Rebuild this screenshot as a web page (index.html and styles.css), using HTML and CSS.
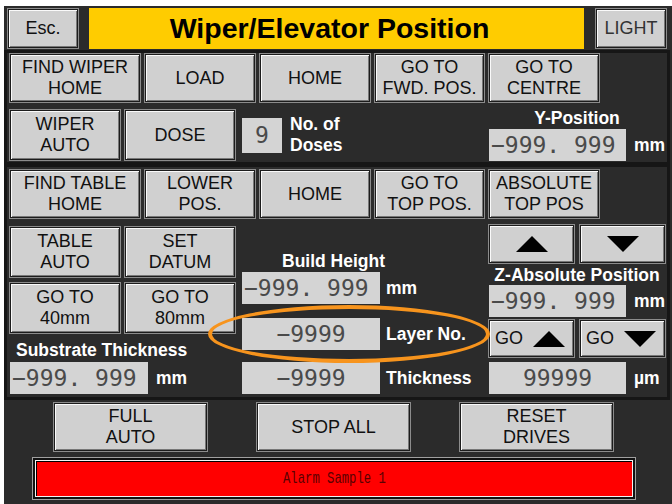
FILE: index.html
```html
<!DOCTYPE html>
<html lang="en">
<head>
    <meta charset="UTF-8">
    <meta name="viewport" content="width=device-width, initial-scale=1.0">
    <title>Wiper/Elevator Position</title>
    <link rel="stylesheet" href="styles.css">
</head>
<body>
    <div class="screen">
        <div class="topbar">
            <button class="btn btn-esc">Esc.</button>
            <div class="title">Wiper/Elevator Position</div>
            <button class="btn btn-light">LIGHT</button>
        </div>

        <div class="panel panel-wiper">
            <div class="btn-row">
                <button class="btn w130">FIND WIPER<br>HOME</button>
                <button class="btn">LOAD</button>
                <button class="btn">HOME</button>
                <button class="btn w109">GO TO<br>FWD. POS.</button>
                <button class="btn">GO TO<br>CENTRE</button>
            </div>
            <div class="wiper-row">
                <button class="btn tall">WIPER<br>AUTO</button>
                <button class="btn tall">DOSE</button>
                <div class="field field-small">9</div>
                <div class="label doses">No. of<br>Doses</div>
                <div class="readout-group y-pos">
                    <div class="label">Y-Position</div>
                    <div class="readout-row">
                        <div class="field">−999. 999</div>
                        <span class="label unit">mm</span>
                    </div>
                </div>
            </div>
        </div>

        <div class="panel panel-table">
            <div class="btn-row">
                <button class="btn w130">FIND TABLE<br>HOME</button>
                <button class="btn">LOWER<br>POS.</button>
                <button class="btn">HOME</button>
                <button class="btn w109">GO TO<br>TOP POS.</button>
                <button class="btn">ABSOLUTE<br>TOP POS</button>
            </div>
            <div class="table-body">
                <div class="col col-left">
                    <div class="btn-grid">
                        <button class="btn tall">TABLE<br>AUTO</button>
                        <button class="btn tall">SET<br>DATUM</button>
                        <button class="btn tall">GO TO<br>40mm</button>
                        <button class="btn tall">GO TO<br>80mm</button>
                    </div>
                    <div class="label substrate">Substrate Thickness</div>
                    <div class="readout-row">
                        <div class="field">−999. 999</div>
                        <span class="label unit">mm</span>
                    </div>
                </div>

                <div class="col col-mid">
                    <div class="label build">Build Height</div>
                    <div class="readout-row">
                        <div class="field">−999. 999</div>
                        <span class="label unit">mm</span>
                    </div>
                    <div class="readout-row layer">
                        <div class="field centered">−9999</div>
                        <span class="label unit">Layer No.</span>
                    </div>
                    <div class="readout-row thick">
                        <div class="field centered">−9999</div>
                        <span class="label unit">Thickness</span>
                    </div>
                </div>

                <div class="col col-right">
                    <div class="arrow-row">
                        <button class="btn arrow">
                            <svg width="32" height="16" viewBox="0 0 32 16"><path d="M16 0 L32 16 L0 16 Z" fill="#000"/></svg>
                        </button>
                        <button class="btn arrow">
                            <svg width="32" height="16" viewBox="0 0 32 16"><path d="M0 0 L32 0 L16 16 Z" fill="#000"/></svg>
                        </button>
                    </div>
                    <div class="label z-label">Z-Absolute Position</div>
                    <div class="readout-row">
                        <div class="field">−999. 999</div>
                        <span class="label unit">mm</span>
                    </div>
                    <div class="arrow-row go-row">
                        <button class="btn arrow go">GO
                            <svg width="32" height="16" viewBox="0 0 32 16"><path d="M16 0 L32 16 L0 16 Z" fill="#000"/></svg>
                        </button>
                        <button class="btn arrow go">GO
                            <svg width="32" height="16" viewBox="0 0 32 16"><path d="M0 0 L32 0 L16 16 Z" fill="#000"/></svg>
                        </button>
                    </div>
                    <div class="readout-row micro">
                        <div class="field centered">99999</div>
                        <span class="label unit">µm</span>
                    </div>
                </div>
            </div>
        </div>

        <div class="bottom-row">
            <button class="btn big">FULL<br>AUTO</button>
            <button class="btn big">STOP ALL</button>
            <button class="btn big">RESET<br>DRIVES</button>
        </div>

        <div class="alarm">
            <div class="alarm-inner"><span class="alarm-text">Alarm Sample 1</span></div>
        </div>

        <div class="highlight"></div>
    </div>
</body>
</html>
```

FILE: styles.css
```css
* {
    box-sizing: border-box;
}

body {
    margin: 0;
    padding: 6px 0 0 4px;
    background: #fff;
    font-family: "Liberation Sans", Arial, sans-serif;
    overflow: hidden;
}

.screen {
    position: relative;
    width: 668px;
    height: 498px;
    background: #2b2b2b;
}

/* header */
.topbar {
    display: flex;
    align-items: center;
    height: 44px;
    padding: 0 4px;
}

.title {
    width: 495px;
    height: 41px;
    margin: 0 12px 0 11px;
    padding-right: 14px;
    background: #ffcc00;
    color: #000;
    font-weight: bold;
    font-size: 28.5px;
    line-height: 41px;
    text-align: center;
    white-space: nowrap;
}

/* buttons */
.btn {
    width: 110px;
    height: 48px;
    padding: 0;
    margin: 0;
    background: #d0d0d0;
    color: #111;
    border: 1px solid #1c1c1c;
    box-shadow: 0 0 0 1px #8c8c8c, inset 1px 1px 0 #fafafa, inset -1px -1px 0 #777;
    font-family: "Liberation Sans", Arial, sans-serif;
    font-size: 18px;
    line-height: 21px;
    text-align: center;
}

.btn-esc,
.btn-light {
    width: 70px;
    height: 39px;
}

.btn-light {
    color: #333;
}

.w130 {
    width: 130px;
}

.w109 {
    width: 109px;
}

.tall {
    height: 50px;
}

/* panels */
.panel {
    width: 666px;
    border: 3px solid #161616;
}

.panel-wiper {
    height: 115px;
    padding: 1px 0 0 3px;
}

.panel-table {
    height: 236px;
    margin-top: -1px;
    padding: 3px 0 0 3px;
}

.btn-row {
    display: flex;
    gap: 5px;
}

.wiper-row {
    display: flex;
    align-items: center;
    height: 52px;
    margin-top: 7px;
    gap: 5px;
}

.label {
    color: #fff;
    font-weight: bold;
    font-size: 17.5px;
    line-height: 20px;
}

.doses {
    margin-left: 3px;
    line-height: 21px;
}

.field {
    width: 137px;
    height: 32px;
    background: #d4d4d4;
    color: #4a4a4a;
    font-family: "DejaVu Sans Mono", monospace;
    font-size: 23px;
    line-height: 32px;
    padding-left: 2px;
    white-space: nowrap;
    overflow: hidden;
}

.field.centered {
    text-align: center;
    padding-left: 0;
}

.field-small {
    width: 40px;
    height: 35px;
    margin-left: 2px;
    line-height: 35px;
    text-align: center;
    padding-left: 0;
}

.readout-group {
    display: flex;
    flex-direction: column;
    align-items: center;
}

.y-pos {
    align-self: flex-end;
    margin-left: auto;
    margin-right: 2px;
    width: 176px;
    gap: 1px;
}

.readout-row {
    display: flex;
    align-items: center;
    gap: 8px;
}

.unit {
    white-space: nowrap;
}

/* table panel body */
.table-body {
    display: flex;
}

.col {
    display: flex;
    flex-direction: column;
}

.col-left {
    width: 232px;
}

.btn-grid {
    display: grid;
    grid-template-columns: 110px 110px;
    gap: 6px 5px;
    margin-top: 9px;
}

.substrate {
    margin: 7px 0 2px 6px;
    white-space: nowrap;
}

.col-left .field {
    width: 138px;
}

.col-mid {
    width: 247px;
}

.build {
    margin: 33px 0 1px 40px;
}

.col-mid .field {
    width: 138px;
}

.col-mid .readout-row {
    gap: 6px;
}

.layer {
    margin-top: 14px;
}

.thick {
    margin-top: 12px;
}

.col-right {
    width: 176px;
}

.arrow-row {
    display: flex;
    gap: 6px;
    margin-top: 7px;
}

.arrow {
    width: 85px;
    height: 38px;
    display: flex;
    align-items: center;
    justify-content: center;
}

.go {
    justify-content: space-between;
    padding: 0 8px 0 5px;
    height: 37px;
}

.go-row {
    margin-top: 3px;
}

.z-label {
    text-align: center;
    margin-top: 2px;
    white-space: nowrap;
}

.micro {
    margin-top: 5px;
}

/* bottom */
.bottom-row {
    display: flex;
    gap: 50px;
    padding-left: 50px;
    margin-top: 3px;
}

.big {
    width: 153px;
    height: 48px;
}

.alarm {
    width: 604px;
    height: 43px;
    margin: 6px 0 0 28px;
    border: 1px solid #a0a0a0;
    background: #111;
    padding: 2px;
}

.alarm-inner {
    height: 100%;
    background: #ff0000;
    border: 1px solid #f4f4f4;
    box-shadow: inset 1px 1px 0 #000;
    color: #5a0000;
    font-family: "Liberation Mono", monospace;
    font-size: 17px;
    line-height: 35px;
    text-align: center;
}

.alarm-text {
    display: inline-block;
    transform: scaleX(0.72);
}

/* orange marker ring */
.highlight {
    position: absolute;
    left: 204px;
    top: 299px;
    width: 282px;
    height: 58px;
    border: 4px solid #f7941d;
    border-radius: 50%;
}
```
